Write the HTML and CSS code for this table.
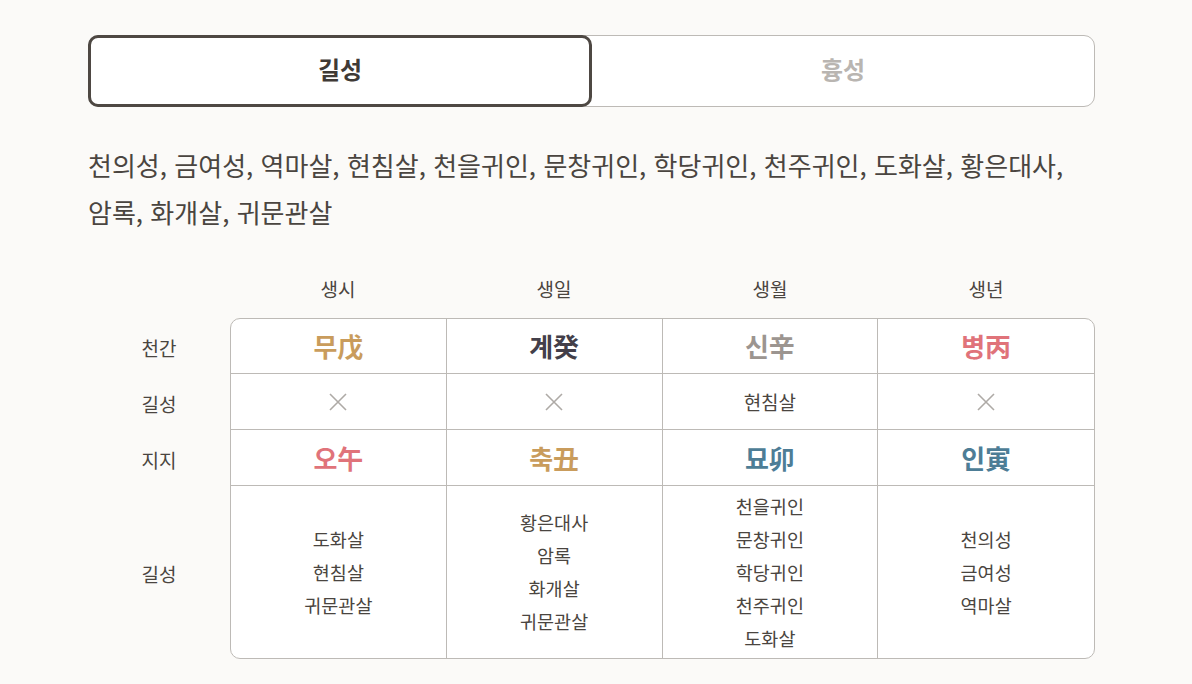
FILE: index.html
```html
<!DOCTYPE html>
<html lang="ko">
<head>
<meta charset="utf-8">
<link rel="stylesheet" href="styles.css">
</head>
<body>
<main class="page">
  <div class="tabs">
    <button class="tab active">길성</button>
    <button class="tab">흉성</button>
  </div>
  <p class="summary">천의성, 금여성, 역마살, 현침살, 천을귀인, 문창귀인, 학당귀인, 천주귀인, 도화살, 황은대사, 암록, 화개살, 귀문관살</p>
  <div class="chart">
    <div class="head-row">
      <div class="label"></div>
      <div class="col-head">생시</div>
      <div class="col-head">생일</div>
      <div class="col-head">생월</div>
      <div class="col-head">생년</div>
    </div>
    <div class="body">
      <div class="labels">
        <div class="label r1">천간</div>
        <div class="label r2">길성</div>
        <div class="label r3">지지</div>
        <div class="label r4">길성</div>
      </div>
      <div class="grid">
        <div class="cell r1 big gold">무戊</div>
        <div class="cell r1 big dark">계癸</div>
        <div class="cell r1 big grey">신辛</div>
        <div class="cell r1 big red">병丙</div>

        <div class="cell r2 none"><svg class="x" viewBox="0 0 20 20" aria-label="없음"><path d="M2 2 L18 18 M18 2 L2 18"/></svg></div>
        <div class="cell r2 none"><svg class="x" viewBox="0 0 20 20" aria-label="없음"><path d="M2 2 L18 18 M18 2 L2 18"/></svg></div>
        <div class="cell r2 small">현침살</div>
        <div class="cell r2 none"><svg class="x" viewBox="0 0 20 20" aria-label="없음"><path d="M2 2 L18 18 M18 2 L2 18"/></svg></div>

        <div class="cell r3 big red">오午</div>
        <div class="cell r3 big gold">축丑</div>
        <div class="cell r3 big blue">묘卯</div>
        <div class="cell r3 big blue">인寅</div>

        <div class="cell r4 list"><span>도화살</span><span>현침살</span><span>귀문관살</span></div>
        <div class="cell r4 list"><span>황은대사</span><span>암록</span><span>화개살</span><span>귀문관살</span></div>
        <div class="cell r4 list"><span>천을귀인</span><span>문창귀인</span><span>학당귀인</span><span>천주귀인</span><span>도화살</span></div>
        <div class="cell r4 list"><span>천의성</span><span>금여성</span><span>역마살</span></div>
      </div>
    </div>
  </div>
</main>
</body>
</html>
```
FILE: styles.css
```css
* { box-sizing: border-box; }
html, body {
  margin: 0;
  padding: 0;
  background: #fbfaf8;
  font-family: "Noto Sans CJK KR", "Noto Sans", sans-serif;
  color: #4a4540;
}
.page {
  width: 1007px;
  margin: 0 0 0 88px;
  padding-top: 35px;
}
.tabs {
  display: flex;
  height: 72px;
  border: 1px solid #bdbab6;
  border-radius: 11px;
  background: #ffffff;
}
.tab {
  flex: 1;
  margin: 0;
  border: none;
  background: transparent;
  font-family: inherit;
  font-size: 24px;
  font-weight: 700;
  color: #b9b5b1;
  border-radius: 10px;
  padding: 0 0 5px;
}
.tab.active {
  margin: -1px 0 -1px -1px;
  border: 3px solid #4e4843;
  color: #3f3a36;
  flex: 0 0 504px;
}
.summary {
  margin: 34px 0 0;
  font-size: 26px;
  line-height: 47px;
  color: #4a4540;
  letter-spacing: 0;
  word-break: keep-all;
}
.chart {
  margin-top: 37px;
}
.head-row {
  display: flex;
  height: 46px;
}
.head-row .label { width: 142px; }
.col-head {
  width: 216px;
  text-align: center;
  font-size: 19px;
  line-height: 34px;
  color: #4a4540;
}
.body {
  display: flex;
}
.labels {
  width: 142px;
  display: flex;
  flex-direction: column;
  padding-top: 1px;
}
.label {
  width: 142px;
  display: flex;
  align-items: center;
  justify-content: center;
  font-size: 19px;
  color: #4a4540;
}
.r1, .r2, .r3 { height: 56px; }
.r4 { height: 172px; }
.grid {
  width: 865px;
  display: grid;
  grid-template-columns: repeat(4, 1fr);
  border: 1px solid #bdbab6;
  border-radius: 10px;
  background: #ffffff;
  overflow: hidden;
}
.cell {
  display: flex;
  align-items: center;
  justify-content: center;
  border-right: 1px solid #bdbab6;
  border-bottom: 1px solid #bdbab6;
}
.cell:nth-child(4n) { border-right: none; }
.cell.r4 { border-bottom: none; }
.cell.r1, .cell.r2, .cell.r3 { height: 56px; }
.cell.r1 { height: 55px; }
.big {
  font-size: 26px;
  font-weight: 700;
  padding-bottom: 1px;
}
.gold { color: #c99c5c; }
.dark { color: #433f4a; }
.grey { color: #9c9590; }
.red { color: #e0737a; }
.blue { color: #4d7d96; }
.x {
  width: 20px;
  height: 20px;
  fill: none;
  stroke: #aeaaa6;
  stroke-width: 1.6;
}
.small {
  font-size: 19px;
  color: #4a4540;
}
.list {
  flex-direction: column;
  font-size: 18.5px;
  line-height: 33px;
  color: #4a4540;
}
```
